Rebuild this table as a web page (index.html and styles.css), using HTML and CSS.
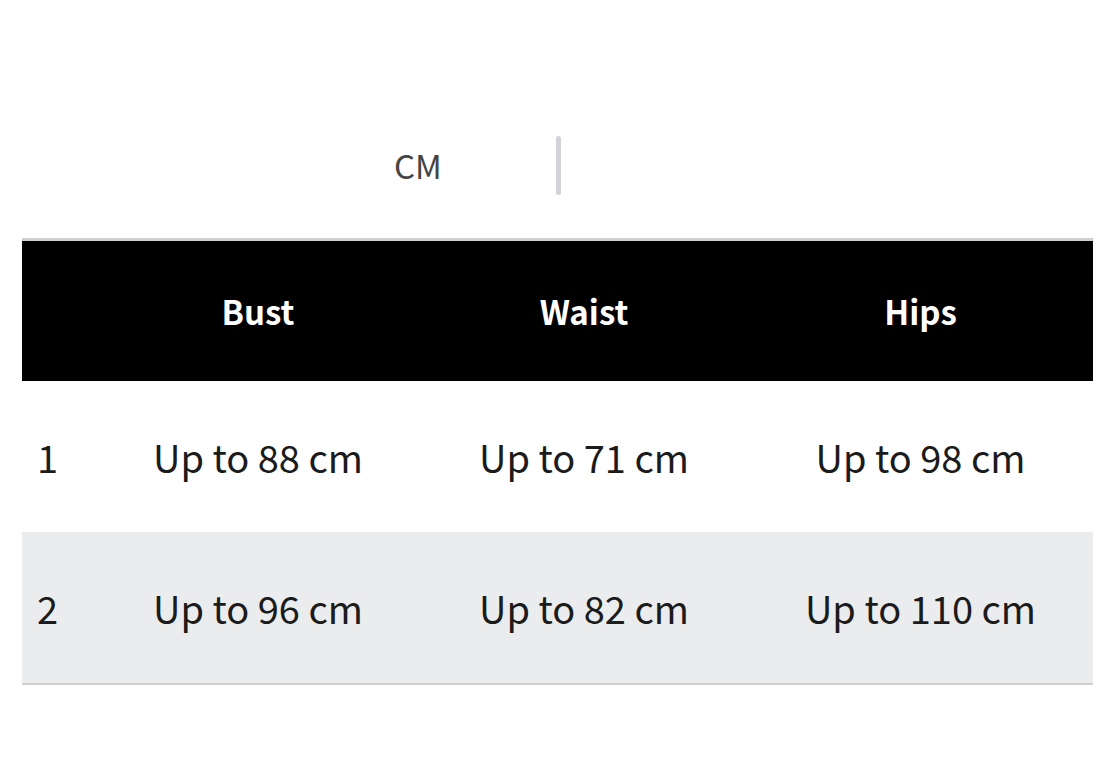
FILE: index.html
```html
<!DOCTYPE html>
<html>
<head>
<meta charset="utf-8">
<link rel="stylesheet" href="styles.css">
</head>
<body>
<div class="page">
  <div class="units">
    <div class="unit active">CM</div>
    <div class="sep"></div>
    <div class="unit inactive">INCH</div>
  </div>
  <div class="table">
    <div class="row head">
      <div class="cell idx"></div>
      <div class="cell">Bust</div>
      <div class="cell">Waist</div>
      <div class="cell last">Hips</div>
    </div>
    <div class="row">
      <div class="cell idx">1</div>
      <div class="cell">Up to 88 cm</div>
      <div class="cell">Up to 71 cm</div>
      <div class="cell last">Up to 98 cm</div>
    </div>
    <div class="row alt">
      <div class="cell idx">2</div>
      <div class="cell">Up to 96 cm</div>
      <div class="cell">Up to 82 cm</div>
      <div class="cell last">Up to 110 cm</div>
    </div>
  </div>
</div>
</body>
</html>
```

FILE: styles.css
```css
html, body {
  margin: 0;
  padding: 0;
  background: #fff;
}
.page {
  width: 1117px;
  height: 781px;
  font-family: "Noto Sans CJK SC", "Noto Sans", sans-serif;
  color: #1b1b1b;
  padding-top: 136px;
  box-sizing: border-box;
}
.units {
  display: flex;
  justify-content: center;
  align-items: center;
  height: 59px;
  margin-bottom: 43px;
}
.unit {
  width: 276px;
  text-align: center;
  font-size: 33px;
  line-height: 59px;
}
.unit.active { color: #444; }
.unit.inactive { color: #fff; }
.sep {
  width: 5px;
  height: 59px;
  border-radius: 3px;
  background: #d2d2da;
}
.table {
  margin: 0 24px 0 22px;
  border-top: 3px solid #cfcfcf;
  border-bottom: 2px solid #cfcfcf;
}
.row {
  display: grid;
  grid-template-columns: 78px 316px 336px 1fr;
  height: 151px;
  align-items: center;
  font-size: 38px;
}
.row.head {
  height: 140px;
  background: #000;
  color: #fff;
  font-weight: 700;
  font-size: 33px;
}
.row.alt { background: #ebeced; }
.cell { text-align: center; }
.cell.last { padding-right: 4px; }
.cell.idx { text-align: left; padding-left: 15px; }
```
